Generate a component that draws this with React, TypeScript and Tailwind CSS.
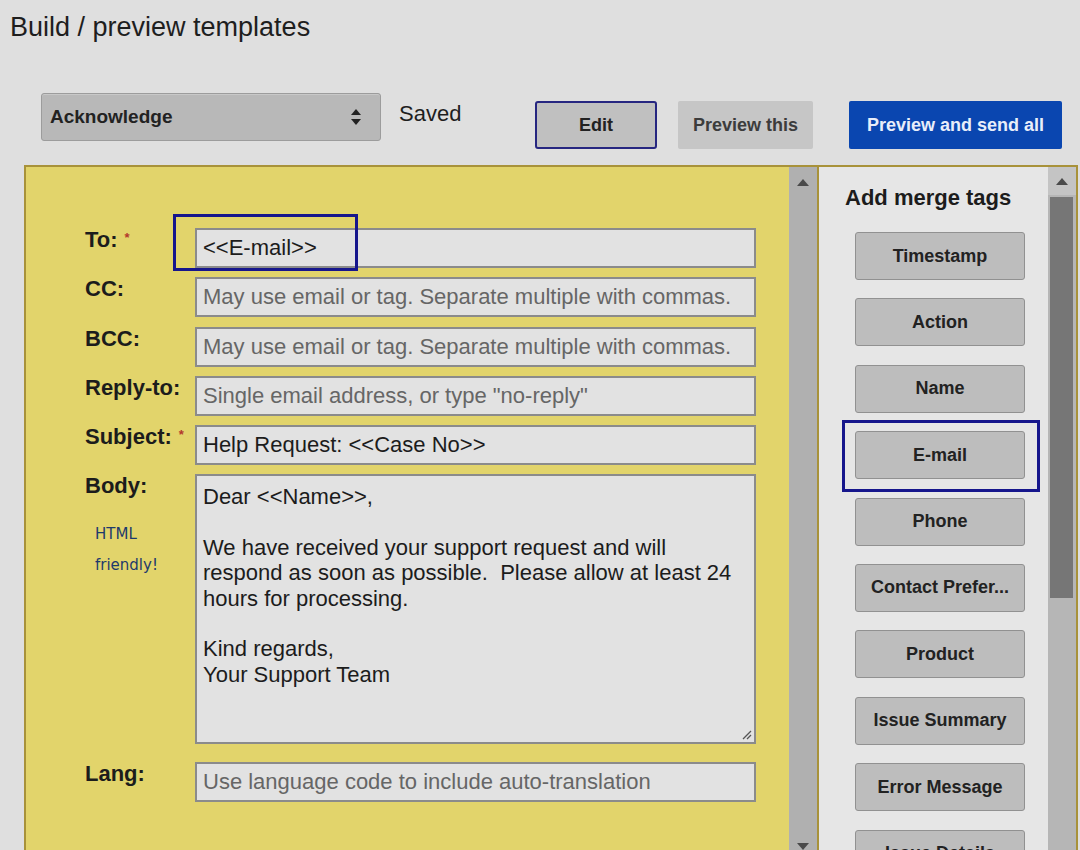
import React from "react";

const UpArrow = () => (
  <svg width="12" height="7" viewBox="0 0 12 7"><path d="M6 0 L12 7 L0 7 Z" fill="#4a4a4a" /></svg>
);
const DownArrow = () => (
  <svg width="12" height="7" viewBox="0 0 12 7"><path d="M0 0 L12 0 L6 7 Z" fill="#4a4a4a" /></svg>
);

const Field = ({ label, req, children, h = "h-[40px]", extra }: { label: string; req?: boolean; children: React.ReactNode; h?: string; extra?: React.ReactNode }) => (
  <div className="flex items-start">
    <div className="w-[110px] shrink-0">
      <div className="text-[22px] leading-[24px] font-bold text-[#1c1c1c] whitespace-nowrap">
        {label}
        {req && <span className="text-[#b3382c] text-[13px] align-top relative top-[-2px] ml-[7px] font-bold">*</span>}
      </div>
      {extra}
    </div>
    <div className={`w-[561px] ${h} border-2 border-[#8b8b8b] bg-[#e2e2e2] pl-[6px] text-[22px] relative`}>
      {children}
    </div>
  </div>
);

const Ph = ({ t }: { t: string }) => (
  <div className="leading-[36px] text-[#666] whitespace-nowrap overflow-hidden">{t}</div>
);
const Val = ({ t }: { t: string }) => (
  <div className="leading-[36px] text-[#1c1c1c] whitespace-nowrap overflow-hidden">{t}</div>
);

const tags = [
  "Timestamp",
  "Action",
  "Name",
  "E-mail",
  "Phone",
  "Contact Prefer...",
  "Product",
  "Issue Summary",
  "Error Message",
  "Issue Details",
];

export default function App() {
  return (
    <div className="w-[1080px] h-[850px] overflow-hidden bg-[#dfdfdf] font-['Liberation_Sans',Arial,sans-serif] text-[#1a1a1a]">
      <h1 className="pl-[10px] pt-[11px] text-[27px] leading-[32px] text-[#1e1e1e]">Build / preview templates</h1>

      <div className="flex items-start pl-[41px] mt-[50px]">
        <div className="w-[340px] h-[48px] rounded-[3px] border border-[#9c9c9c] bg-[#b8b8b8] flex items-center justify-between pl-[8px] pr-[18px] shadow-[inset_0_1px_0_#c8c8c8]">
          <span className="text-[19px] font-bold text-[#222]">Acknowledge</span>
          <svg width="12" height="18" viewBox="0 0 12 18">
            <path d="M6 1 L11 7 L1 7 Z" fill="#222" />
            <path d="M1 11 L11 11 L6 17 Z" fill="#222" />
          </svg>
        </div>
        <div className="w-[154px] pl-[18px] mt-[8px] text-[22px] leading-[26px] text-[#1e1e1e]">Saved</div>
        <div className="mt-[8px] w-[122px] h-[48px] rounded-[3px] border-2 border-[#262680] bg-[#c0c0c0] flex items-center justify-center text-[18px] font-bold text-[#222]">Edit</div>
        <div className="mt-[8px] ml-[21px] w-[135px] h-[48px] rounded-[2px] bg-[#c6c6c6] flex items-center justify-center text-[18px] font-bold text-[#3c3c3c]">Preview this</div>
        <div className="mt-[8px] ml-[36px] w-[213px] h-[48px] rounded-[2px] bg-[#0a46b0] flex items-center justify-center text-[18px] font-bold text-[#e8eefa]">Preview and send all</div>
      </div>

      <div className="flex ml-[24px] mt-[16px] h-[697px]">
        {/* Yellow form panel */}
        <div className="w-[795px] border-2 border-[#a8923a] bg-[#e2d46b] flex relative">
          <div className="flex-1 pl-[59px] pt-[61px] flex flex-col">
            <div className="flex flex-col gap-[9.3px]">
              <Field label="To:" req>
                <Val t="<<E-mail>>" />
              </Field>
              <Field label="CC:">
                <Ph t="May use email or tag. Separate multiple with commas." />
              </Field>
              <Field label="BCC:">
                <Ph t="May use email or tag. Separate multiple with commas." />
              </Field>
              <Field label="Reply-to:">
                <Ph t={'Single email address, or type "no-reply"'} />
              </Field>
              <Field label="Subject:" req>
                <Val t="Help Request: <<Case No>>" />
              </Field>
              <Field
                label="Body:"
                h="h-[270px]"
                extra={
                  <div className="pl-[10px] mt-[21px] font-['DejaVu_Sans',Verdana,sans-serif] text-[15px] leading-[31px] text-[#1e3a6b]">
                    <div>HTML</div>
                    <div>friendly!</div>
                  </div>
                }
              >
                <div className="pt-[8px] leading-[25.3px] text-[#1c1c1c] whitespace-pre">
                  {"Dear <<Name>>,\n\nWe have received your support request and will\nrespond as soon as possible.  Please allow at least 24\nhours for processing.\n\nKind regards,\nYour Support Team"}
                </div>
                <svg className="absolute right-[2px] bottom-[2px]" width="12" height="12" viewBox="0 0 12 12">
                  <path d="M11 3 L3 11 M11 7 L7 11" stroke="#555" strokeWidth="1.3" />
                </svg>
              </Field>
            </div>
            <div className="mt-[18px]">
              <Field label="Lang:">
                <Ph t="Use language code to include auto-translation" />
              </Field>
            </div>
          </div>
          <div className="w-[28px] bg-[#b0b0b0] flex flex-col justify-between items-center">
            <div className="h-[28px] flex items-center justify-center pt-[2px]"><UpArrow /></div>
            <div className="h-[28px] flex items-center justify-center"><DownArrow /></div>
          </div>
          <div className="absolute left-[147px] top-[47px] w-[185px] h-[57px] border-[3px] border-[#16168c]" />
        </div>

        {/* Merge tags panel */}
        <div className="w-[259px] border-t-2 border-r-2 border-[#a8923a] bg-[#e6e6e6] flex relative">
          <div className="flex-1 pl-[26px] pt-[18px]">
            <div className="text-[22px] leading-[26px] font-bold text-[#1c1c1c]">Add merge tags</div>
            <div className="mt-[21px] ml-[10px] flex flex-col gap-[18.4px]">
              {tags.map((t) => (
                <div
                  key={t}
                  className="w-[170px] h-[48px] shrink-0 rounded-[3px] border border-[#919191] bg-[#bdbdbd] flex items-center justify-center text-[18px] font-bold text-[#222] whitespace-nowrap"
                >
                  {t}
                </div>
              ))}
            </div>
          </div>
          <div className="w-[28px] bg-[#b6b6b6] flex flex-col">
            <div className="h-[28px] bg-[#c4c4c4] flex items-center justify-center"><UpArrow /></div>
            <div className="ml-[2px] mr-[3px] mt-[2px] h-[401px] bg-[#767676]" />
          </div>
          <div className="absolute left-[23px] top-[253px] w-[198px] h-[72px] border-[3px] border-[#16168c]" />
        </div>
      </div>
    </div>
  );
}
